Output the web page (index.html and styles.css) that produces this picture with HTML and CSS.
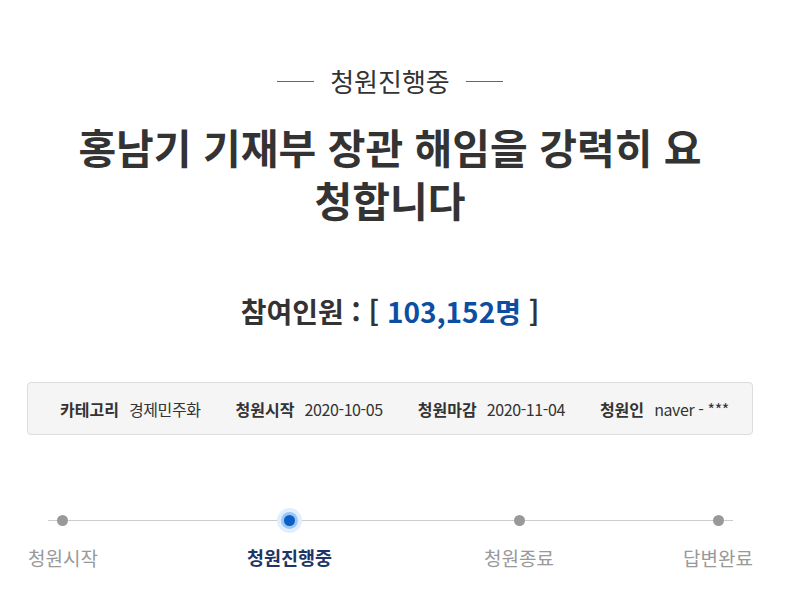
FILE: index.html
```html
<!DOCTYPE html>
<html lang="ko">
<head>
    <meta charset="UTF-8">
    <meta name="viewport" content="width=device-width, initial-scale=1.0">
    <title>청원진행중</title>
    <link rel="stylesheet" href="styles.css">
</head>
<body>
    <div class="petition">
        <div class="status">
            <span class="status-line"></span>
            <span class="status-text">청원진행중</span>
            <span class="status-line"></span>
        </div>
        <h1 class="title">홍남기 기재부 장관 해임을 강력히 요청합니다</h1>
        <div class="count">참여인원 : [ <span class="num">103,152명</span> ]</div>

        <ul class="info">
            <li><b>카테고리</b> 경제민주화</li>
            <li><b>청원시작</b> 2020-10-05</li>
            <li><b>청원마감</b> 2020-11-04</li>
            <li><b>청원인</b> naver - ***</li>
        </ul>

        <div class="steps">
            <div class="step"><span class="dot"></span><span class="label">청원시작</span></div>
            <div class="step on"><span class="dot"></span><span class="label">청원진행중</span></div>
            <div class="step"><span class="dot"></span><span class="label">청원종료</span></div>
            <div class="step"><span class="dot"></span><span class="label">답변완료</span></div>
        </div>
    </div>
</body>
</html>
```

FILE: styles.css
```css
body {
    font-family: "Noto Sans CJK KR", "Noto Sans", sans-serif;
    margin: 0;
    padding: 0;
    background-color: #fff;
    color: #333;
}

.petition {
    width: 726px;
    margin: 0 0 0 27px;
    padding-top: 62px;
}

.status {
    display: flex;
    align-items: center;
    justify-content: center;
    gap: 16px;
}

.status-line {
    width: 37px;
    height: 1px;
    background-color: #666;
}

.status-text {
    font-size: 26px;
    line-height: 38px;
}

.title {
    width: 640px;
    margin: 20px auto 0;
    font-size: 41px;
    line-height: 53px;
    font-weight: 700;
    text-align: center;
}

.count {
    margin-top: 66px;
    font-size: 28px;
    font-weight: 700;
    text-align: center;
    line-height: 38px;
}

    .count .num {
        color: #0b4ea2;
    }

.info {
    list-style: none;
    margin: 52px 0 0;
    padding: 0 0 0 32px;
    height: 51px;
    display: flex;
    align-items: center;
    gap: 35px;
    background-color: #f5f5f5;
    border: 1px solid #ddd;
    border-radius: 4px;
    font-size: 16px;
}

    .info li {
        letter-spacing: -0.4px;
    }

    .info b {
        margin-right: 6px;
        letter-spacing: 0;
    }

.steps {
    position: relative;
    display: flex;
    justify-content: space-between;
    margin-top: 76px;
}

    .steps::before {
        content: "";
        position: absolute;
        left: 21px;
        right: 20px;
        top: 9px;
        height: 1px;
        background-color: #ccc;
    }

.step {
    position: relative;
    display: flex;
    flex-direction: column;
    align-items: center;
    margin-left: 1px;
}

    .step:nth-child(2) {
        margin-left: 21px;
    }

    .step:nth-child(3) {
        margin-left: 24px;
    }

.dot {
    width: 11px;
    height: 11px;
    margin: 4px 0;
    border-radius: 50%;
    background-color: #999;
}

.label {
    margin-top: 14px;
    font-size: 19px;
    color: #999;
}

.step.on .dot {
    background-color: #0a5fc5;
    box-shadow: 0 0 0 3px #9cc6f5, 0 0 0 7px #e1eefc;
}

.step.on .label {
    color: #1d3568;
    font-weight: 700;
    font-size: 18.5px;
}
```
